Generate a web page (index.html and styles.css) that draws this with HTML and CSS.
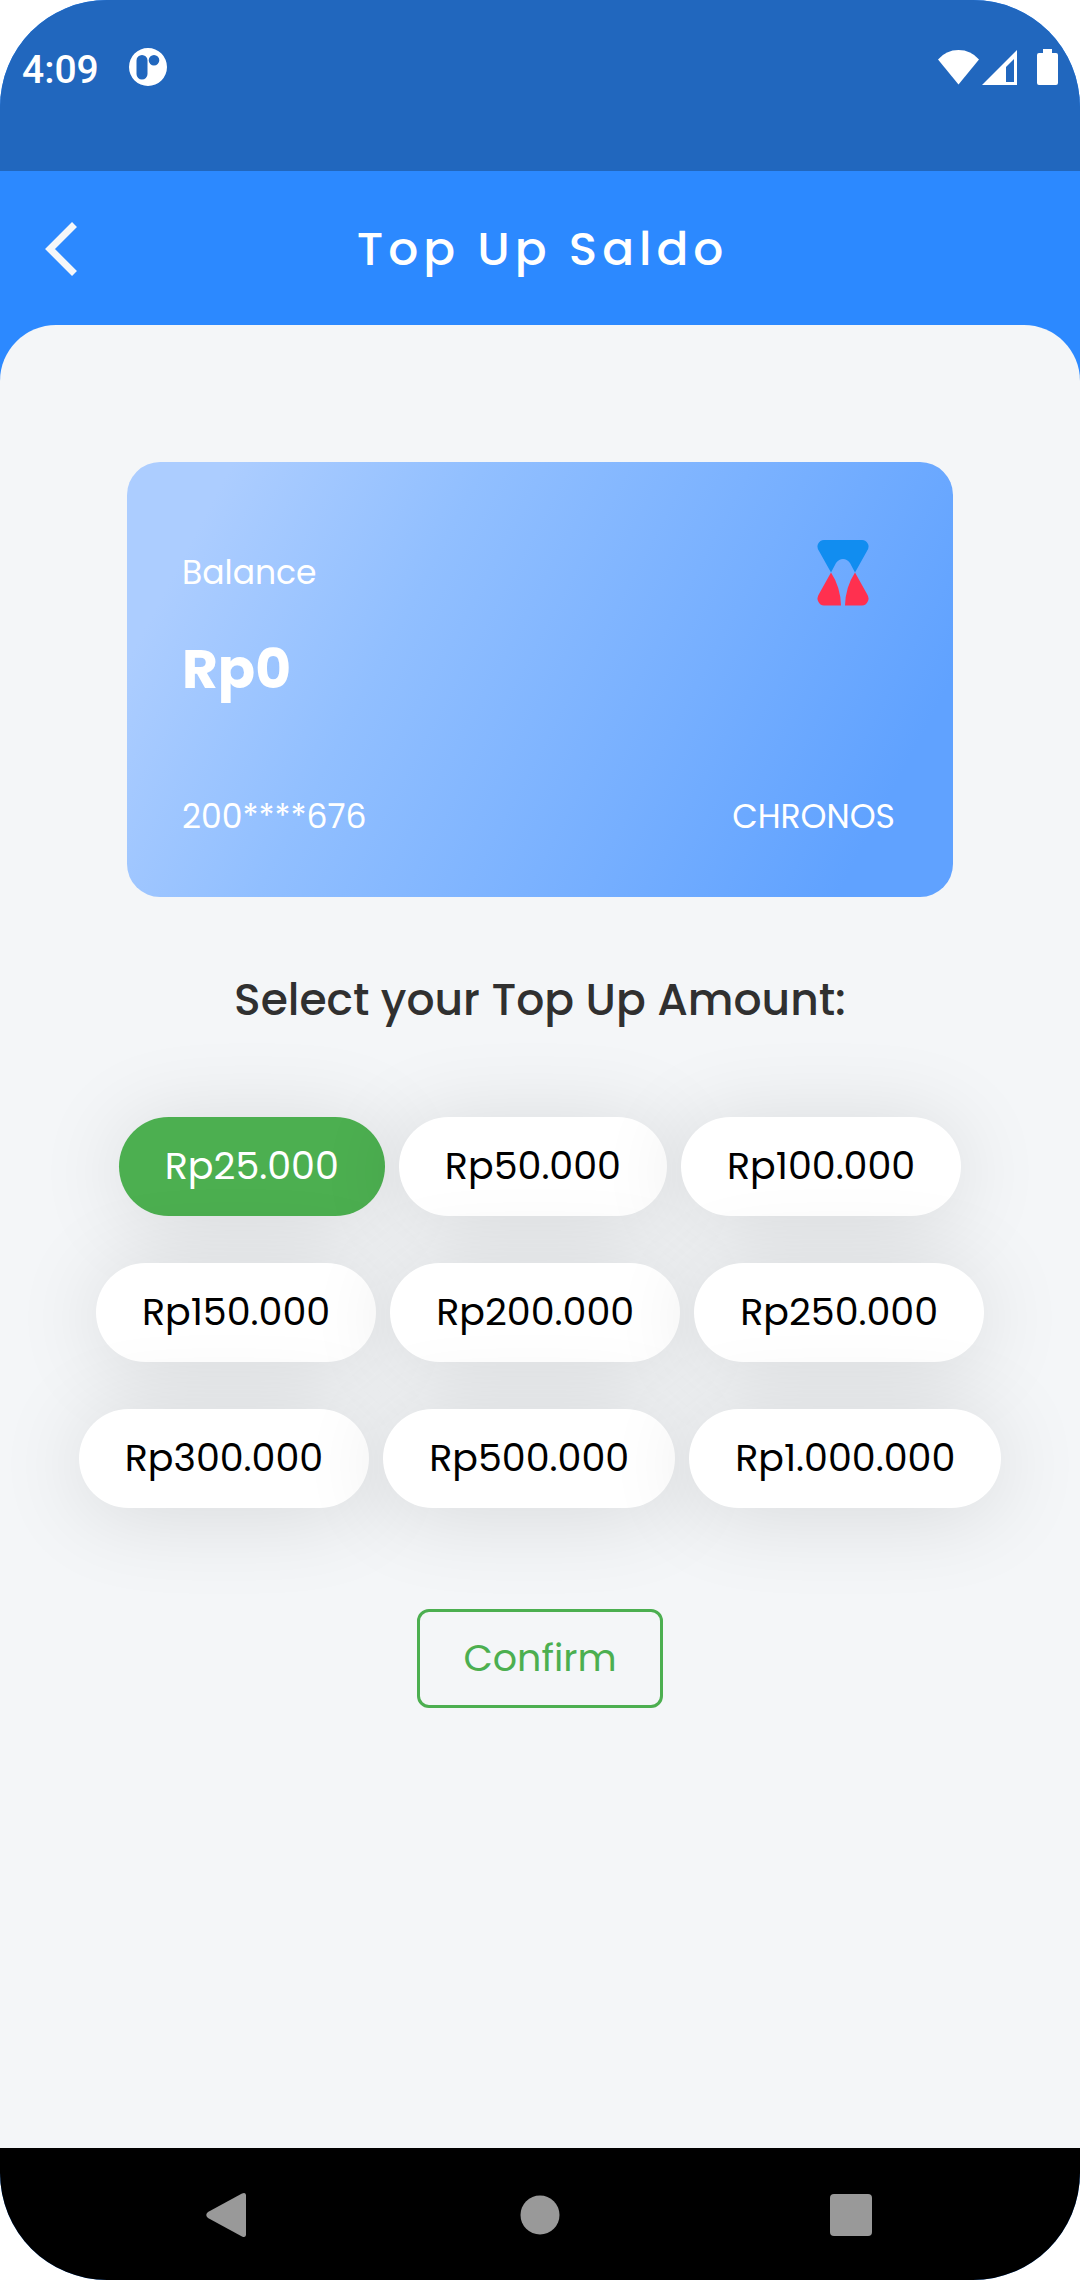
FILE: index.html
```html
<!DOCTYPE html>
<html lang="en">
<head>
<meta charset="utf-8">
<meta name="viewport" content="width=device-width, initial-scale=1">
<title>Top Up Saldo</title>
<link rel="stylesheet" href="styles.css">
</head>
<body>
<div class="screen">
  <div class="status-bar">
    <span class="clock">4:09</span>
    <svg class="status-app" viewBox="0 0 38 38" aria-hidden="true">
      <path fill="#fff" fill-rule="evenodd" d="M19 0a19 19 0 1 1 0 38a19 19 0 1 1 0-38zM13 7a5.500 5.500 0 0 0-5.500 5.500v13.500a5.500 5.500 0 0 0 11 0v-13.500a5.500 5.500 0 0 0-5.500-5.500zM25 7a5.300 5.300 0 1 0 0 10.600a5.300 5.300 0 1 0 0-10.600z"/>
    </svg>
    <div class="status-icons">
      <svg class="icon-wifi" viewBox="0 0 41 36" aria-hidden="true"><path fill="#fff" d="M0 10.500Q8 1 20.500 1T41 10.500L20.500 35.500z"/></svg>
      <svg class="icon-signal" viewBox="0 0 35 36" aria-hidden="true"><path fill="#fff" fill-rule="evenodd" d="M35 1V36H0zM32 10L24 18V33H32z"/></svg>
      <svg class="icon-battery" viewBox="0 0 21 36" aria-hidden="true"><path fill="#fff" d="M6 0h9v4h4q2 0 2 2v28q0 2-2 2h-17q-2 0-2-2V6q0-2 2-2h4z"/></svg>
    </div>
  </div>

  <header class="app-bar">
    <button class="back" type="button" aria-label="Back">
      <svg viewBox="0 0 32 54" aria-hidden="true"><path d="M29.500 2.500L5 27L29.500 51.500" fill="none" stroke="#f5f7f9" stroke-width="7"/></svg>
    </button>
    <h1 class="title">Top Up Saldo</h1>
  </header>

  <main class="panel">
    <section class="card" aria-label="Balance">
      <div class="card-row">
        <div class="balance">
          <p class="card-text">Balance</p>
          <p class="amount">Rp0</p>
        </div>
        <svg class="logo" viewBox="0 0 52 66" aria-hidden="true">
          <path fill="#118df0" d="M7 0H45Q49 0 51 4Q52.500 7 50 11L38 32.500L33 23Q30 19 26 19T19 23L14 32.500L2 11Q-.500 7 1 4Q3 0 7 0z"/>
          <path fill="#ff304f" d="M14 32.500Q23.500 47 24 65.500H7Q3 65.500 1 61Q-.500 58 2 54zM38 32.500Q28.500 47 28 65.500H45Q49 65.500 51 61Q52.500 58 50 54z"/>
        </svg>
      </div>
      <div class="card-row">
        <p class="card-text">200****676</p>
        <p class="card-text">CHRONOS</p>
      </div>
    </section>

    <h2 class="prompt">Select your Top Up Amount:</h2>

    <div class="amounts" role="group" aria-label="Top up amount">
      <div class="amount-row">
        <button class="chip chip-selected" type="button" aria-pressed="true">Rp25.000</button>
        <button class="chip" type="button">Rp50.000</button>
        <button class="chip" type="button">Rp100.000</button>
      </div>
      <div class="amount-row">
        <button class="chip" type="button">Rp150.000</button>
        <button class="chip" type="button">Rp200.000</button>
        <button class="chip" type="button">Rp250.000</button>
      </div>
      <div class="amount-row">
        <button class="chip" type="button">Rp300.000</button>
        <button class="chip" type="button">Rp500.000</button>
        <button class="chip" type="button">Rp1.000.000</button>
      </div>
    </div>

    <button class="confirm" type="button">Confirm</button>
  </main>

  <nav class="nav-bar" aria-label="System navigation">
    <button class="nav-button" type="button" aria-label="Back"><svg viewBox="0 0 48 48" aria-hidden="true"><path fill="#999" d="M37 2.500Q40.500 1 41 4V44Q40.500 47 37 45.500L3 27Q-.500 24 3 21z"/></svg></button>
    <button class="nav-button" type="button" aria-label="Home"><svg viewBox="0 0 48 48" aria-hidden="true"><circle cx="24" cy="24" r="19.500" fill="#999"/></svg></button>
    <button class="nav-button" type="button" aria-label="Recent apps"><svg viewBox="0 0 48 48" aria-hidden="true"><rect x="3" y="3" width="42" height="42" rx="4" fill="#999"/></svg></button>
  </nav>
</div>
</body>
</html>
```

FILE: styles.css
```css
* { box-sizing: border-box; }

body {
  margin: 0;
  background: #fff;
  font-family: "Poppins", "Inter", sans-serif;
}

h1, h2, p { margin: 0; }

button {
  margin: 0;
  padding: 0;
  border: 0;
  background: none;
  font: inherit;
  cursor: pointer;
}

svg { display: block; }

.screen {
  display: flex;
  flex-direction: column;
  min-height: 100vh;
  overflow: hidden;
  border-radius: 107px;
  background: #2c89ff;
}

.status-bar {
  display: flex;
  align-items: flex-start;
  height: 171px;
  padding: 48px 22px 0;
  background: #2167be;
  color: #fff;
}

.clock {
  font: 500 39px/44px Roboto, sans-serif;
}

.status-app {
  width: 38px;
  height: 38px;
  margin-left: 30px;
}

.status-icons {
  display: flex;
  align-items: center;
  gap: 3px;
  height: 38px;
  margin-left: auto;
}

.icon-wifi { width: 41px; height: 36px; }
.icon-signal { width: 35px; height: 36px; }
.icon-battery { width: 21px; height: 36px; margin-left: 17px; }

.app-bar {
  display: grid;
  grid-template-columns: 32px 1fr 32px;
  align-items: center;
  height: 154px;
  padding: 2px 45px 0;
  color: #fff;
}

.back svg { width: 32px; height: 54px; }

.title {
  padding-left: 5px;
  font-size: 47px;
  font-weight: 500;
  line-height: 64px;
  letter-spacing: 5px;
  text-align: center;
}

.panel {
  display: flex;
  flex: 1;
  flex-direction: column;
  align-items: center;
  padding: 137px 32px 64px;
  border-radius: 56px 56px 0 0;
  background: #f4f6f8;
}

.card {
  display: flex;
  flex-direction: column;
  justify-content: space-between;
  width: 100%;
  max-width: 826px;
  min-height: 435px;
  padding: 78px 58px 54px 55px;
  border-radius: 33px;
  background: linear-gradient(118deg, #accdff 10%, #91bfff 34%, #76afff 65%, #60a2ff 89%);
  color: #fff;
}

.card-row {
  display: flex;
  align-items: flex-start;
  justify-content: space-between;
}

.card-text {
  font-size: 33px;
  line-height: 52px;
}

.balance { padding-top: 7px; }

.amount {
  margin-top: 30px;
  font-size: 55px;
  font-weight: 700;
  line-height: 80px;
}

.logo {
  width: 52px;
  height: 66px;
  margin-right: 26px;
}

.prompt {
  margin-top: 69px;
  color: #303030;
  font-size: 44px;
  font-weight: 500;
  line-height: 68px;
  text-align: center;
}

.amounts {
  display: flex;
  flex-direction: column;
  gap: 47px;
  margin-top: 83px;
}

.amount-row {
  display: flex;
  flex-wrap: wrap;
  justify-content: center;
  gap: 14px;
}

.chip {
  height: 99px;
  padding: 0 46px 2px;
  border-radius: 50px;
  background: #fff;
  box-shadow: 0 6px 90px rgba(0, 0, 0, 0.12);
  color: #000;
  font-size: 38px;
}

.chip-selected {
  background: #4caf50;
  color: #fff;
}

.confirm {
  height: 99px;
  margin-top: 101px;
  padding: 0 43px 2px;
  border: 3px solid #4caf50;
  border-radius: 12px;
  color: #4caf50;
  font-size: 38px;
}

.nav-bar {
  display: flex;
  align-items: center;
  justify-content: space-between;
  height: 132px;
  padding: 1px 19% 0;
  background: #000;
}

.nav-button svg { width: 48px; height: 48px; }
```
